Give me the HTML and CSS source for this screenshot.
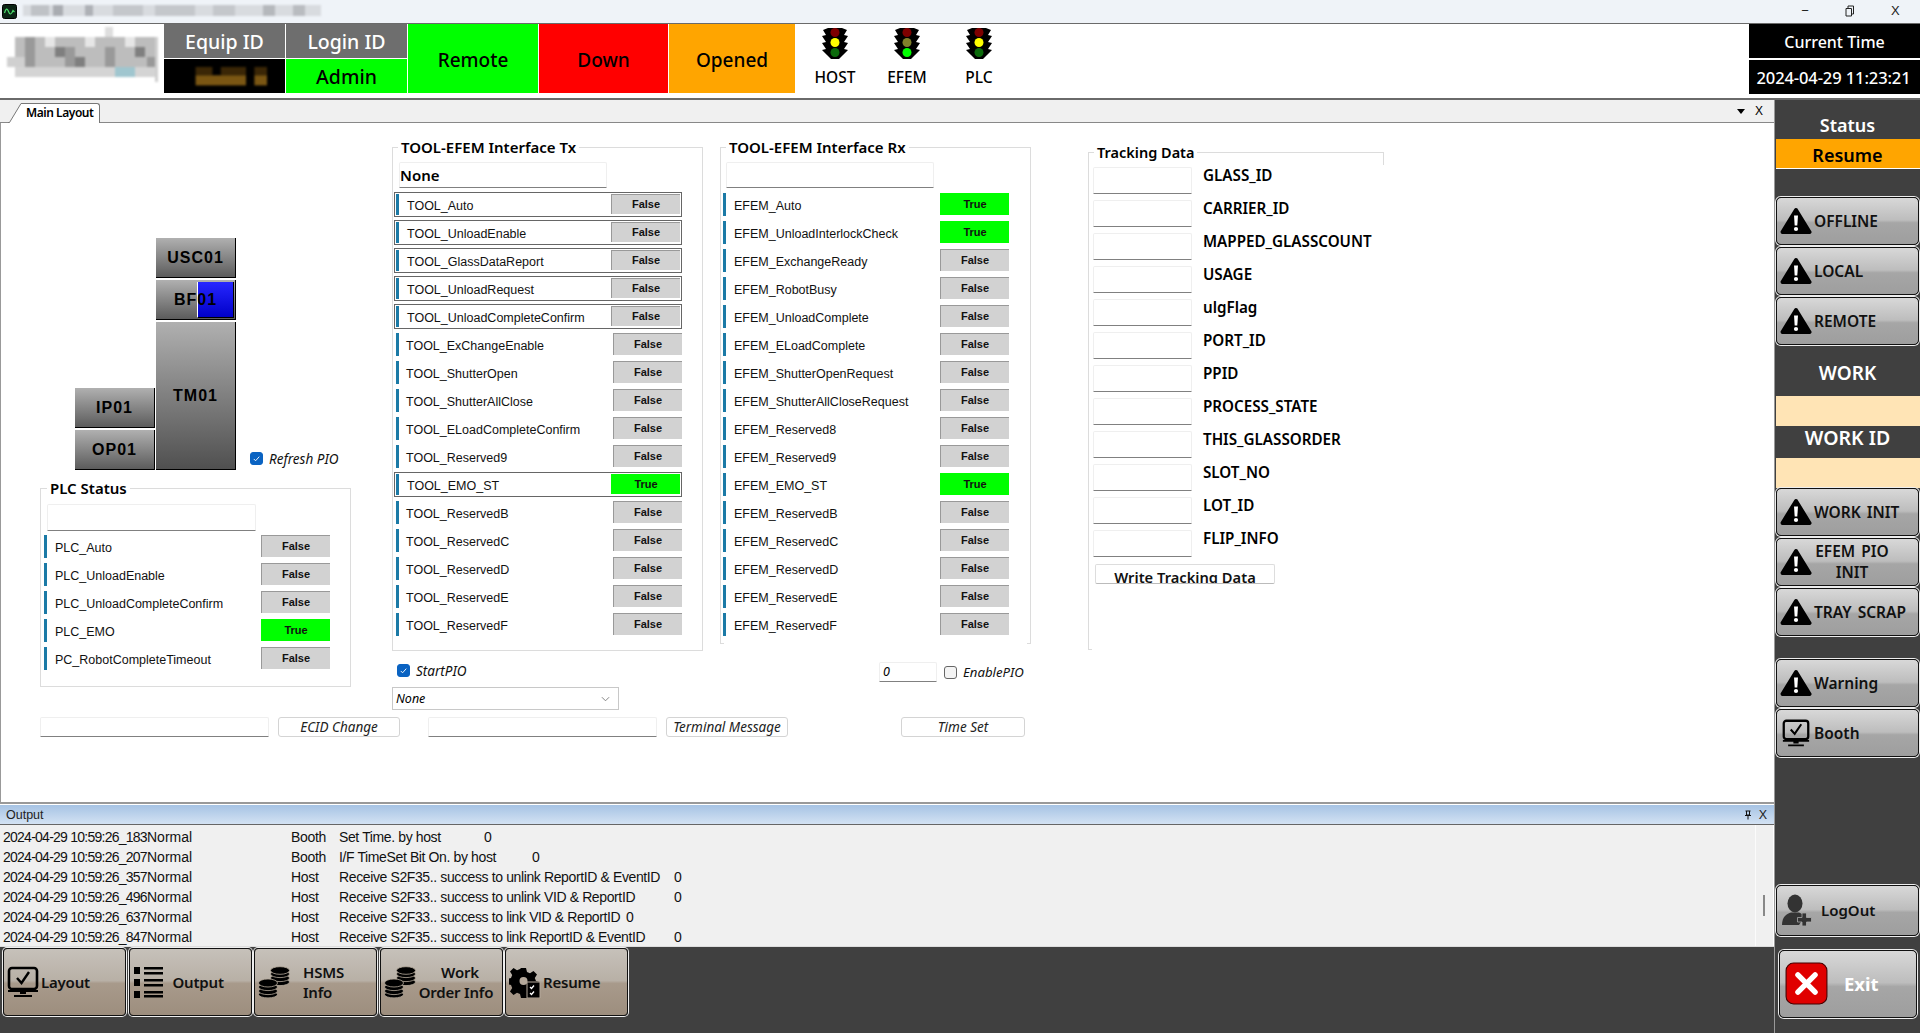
FILE: index.html
```html
<!DOCTYPE html>
<html lang="en">
<head>
<meta charset="utf-8">
<title>Equipment Console</title>
<link rel="stylesheet" href="styles.css">
</head>
<body>
<svg class="defs" width="0" height="0">
  <symbol id="warn" viewBox="0 0 32 28"><path d="M16 3 L29.5 25 H2.5 Z" fill="#000" stroke="#000" stroke-width="4" stroke-linejoin="round"/><path d="M14 8.5 h4 l-.7 10 h-2.6 Z" fill="#fff"/><circle cx="16" cy="22" r="2.1" fill="#fff"/></symbol>
  <symbol id="monitor" viewBox="0 0 32 32"><rect x="2" y="2" width="28" height="21" rx="3" fill="none" stroke="#000" stroke-width="2.6"/><path d="M10 12 l4.5 5 L22 6" fill="none" stroke="#000" stroke-width="2.4"/><path d="M1 24 h30 v2 h-30 Z M13 26 h6 v2 h-6 Z M7 29 h18 v2 H7 Z" fill="#000"/></symbol>
  <symbol id="list" viewBox="0 0 32 32"><path d="M1 1 h6 v7 H1 Z M11 1 h19 v2.5 H11 Z M11 6 h19 v2.5 H11 Z M1 13 h6 v7 H1 Z M11 13 h19 v2.5 H11 Z M11 18 h19 v2.5 H11 Z M1 25 h6 v7 H1 Z M11 25 h19 v2.5 H11 Z M11 29 h19 v2.5 H11 Z" fill="#000"/></symbol>
  <symbol id="coins" viewBox="0 0 32 32">
    <g fill="#000" stroke="#b5a99b" stroke-width=".8"><ellipse cx="22" cy="16" rx="9.500" ry="3.600"/><ellipse cx="22" cy="12" rx="9.500" ry="3.600"/><ellipse cx="22" cy="8" rx="9.500" ry="3.600"/><ellipse cx="22" cy="4.500" rx="9.500" ry="3.800"/>
    <ellipse cx="10" cy="28.500" rx="9.500" ry="3.400"/><ellipse cx="10" cy="25" rx="9.500" ry="3.600"/><ellipse cx="10" cy="21" rx="9.500" ry="3.600"/><ellipse cx="10" cy="17" rx="9.500" ry="4"/></g></symbol>
  <symbol id="gear" viewBox="0 0 32 32"><path d="M12 2 h5 l1 4 3 1.300 3.500-2.200 3.500 3.500-2.200 3.500 1.200 2.900 4 1 v5 l-8 0 -4 4 v7 h-7 l-1-4 -3-1.200-3.500 2.200-3.500-3.500 2.200-3.500-1.200-3-4-1 v-5 l4-1 1.200-3-2.200-3.500 3.500-3.500 3.500 2.200 3-1.300 Z" fill="#000"/><circle cx="14.500" cy="15" r="4" fill="#b5a99b"/><rect x="18" y="16" width="13" height="16" fill="#000" stroke="#b5a99b"/><path d="M21 21 l1.500 1.500 L25 19.500 M21 27 l1.500 1.500 L25 25.500" fill="none" stroke="#fff" stroke-width="1.300"/></symbol>
  <symbol id="user" viewBox="0 0 32 32"><ellipse cx="14" cy="9.500" rx="7.500" ry="9" fill="#333"/><path d="M1 31 C1 22 6 20 10 18.500 h8 C21 20 23 21 24 22 L18 31 Z" fill="#333"/><path d="M21 19 h4.500 v4.500 h5 v4.500 h-5 v4 h-4.500 v-4 h-4.500 v-4.500 h4.500 Z" fill="#333" stroke="#aaa" stroke-width=".8"/></symbol>
  <symbol id="signal-host" viewBox="0 0 28 32"><use href="#lamp-body"/><circle cx="14" cy="5.500" r="4.500" fill="#7d0000"/><circle cx="14" cy="15.500" r="4.500" fill="#ffff00"/><circle cx="14" cy="25.500" r="4.500" fill="#0b6b0b"/></symbol>
  <symbol id="signal-efem" viewBox="0 0 28 32"><use href="#lamp-body"/><circle cx="14" cy="5.500" r="4.500" fill="#7d0000"/><circle cx="14" cy="15.500" r="4.500" fill="#80802a"/><circle cx="14" cy="25.500" r="4.500" fill="#00ff00"/></symbol>
  <symbol id="lamp-body" viewBox="0 0 28 32"><path d="M7 1 h14 l5 2 -3 5 4 1 -4 6 4 1 -4 6 4 1 -5 5 -4 4 h-8 l-4-4 -5-5 4-1 -4-6 4-1 -4-6 4-1 -3-5 Z" fill="#000"/></symbol>
</svg>

<div class="app">
  <div class="titlebar">
    <svg class="app-icon" viewBox="0 0 15 15"><rect x=".5" y=".5" width="14" height="14" rx="2" fill="#0c2416" stroke="#000"/><path d="M2.500 9 Q4.500 2 6.500 7.500 T11 6.500 L12.500 8" fill="none" stroke="#4ee26d" stroke-width="1.200"/></svg>
    <svg class="title-blur" viewBox="0 0 298 12"><g fill="#c4c7cb"><rect width="298" height="11" fill="#d8dbdf"/><rect x="8" width="18" height="11" fill="#bfc2c6"/><rect x="30" width="10" height="11" fill="#a9acb1"/><rect x="62" width="8" height="11" fill="#aeb1b6"/><rect x="90" width="30" height="11"/><rect x="132" width="40" height="11"/><rect x="190" width="22" height="11"/><rect x="240" width="12" height="11" fill="#b5b8bc"/><rect x="270" width="12" height="11" fill="#b9bcc0"/></g></svg>
    <div class="win-controls">
      <span class="win-min">−</span>
      <svg class="win-restore" viewBox="0 0 10 12"><path d="M1 3.500 h5.500 v7.500 H1 Z M3 3 V1 h5.500 v8 H7" fill="none" stroke="#222" stroke-width="1"/></svg>
      <span class="win-close">X</span>
    </div>
  </div>

  <header class="header">
    <svg class="logo" viewBox="0 0 153 58">
      <rect x="10" y="10" width="143" height="30" fill="#bdbdbd"/><rect x="2" y="30" width="20" height="10" fill="#d0d0d0"/>
      <g fill="#999"><rect x="20" y="10" width="10" height="30"/><rect x="60" y="20" width="10" height="20"/><rect x="100" y="20" width="10" height="20"/><rect x="142" y="30" width="10" height="10"/></g>
      <g fill="#7f7f7f"><rect x="50" y="20" width="10" height="10"/><rect x="70" y="30" width="10" height="10"/><rect x="130" y="20" width="10" height="10"/></g>
      <g fill="#e6e6e6"><rect x="40" y="10" width="10" height="10"/><rect x="80" y="10" width="10" height="10"/><rect x="120" y="10" width="10" height="10"/></g>
      <rect x="100" y="0" width="8" height="10" fill="#dedede"/>
      <rect x="10" y="40" width="143" height="10" fill="#d4d4d4"/>
      <rect x="110" y="40" width="20" height="10" fill="#a0c6cf"/>
      <rect x="150" y="10" width="3" height="45" fill="#cfcfcf"/>
    </svg>
    <div class="id-grid">
      <div class="cell cell-grey">Equip ID</div>
      <div class="cell cell-grey">Login ID</div>
      <div class="cell cell-black"><svg class="id-blur" viewBox="0 0 100 24"><g fill="#3a2606"><rect x="15" y="0" width="20" height="10"/><rect x="45" y="0" width="30" height="10"/><rect x="85" y="0" width="15" height="10"/></g><g fill="#7a5613"><rect x="15" y="10" width="60" height="12"/><rect x="85" y="10" width="15" height="12"/></g></svg></div>
      <div class="cell cell-green">Admin</div>
    </div>
    <div class="state state-green">Remote</div>
    <div class="state state-red">Down</div>
    <div class="state state-orange">Opened</div>
    <div class="signals">
      <div class="signal"><svg class="signal-icon"><use href="#signal-host"/></svg><span>HOST</span></div>
      <div class="signal"><svg class="signal-icon"><use href="#signal-efem"/></svg><span>EFEM</span></div>
      <div class="signal"><svg class="signal-icon"><use href="#signal-host"/></svg><span>PLC</span></div>
    </div>
    <div class="clock">
      <div class="clock-cell clock-title">Current Time</div>
      <div class="clock-cell clock-date">2024-04-29 11:23:21</div>
    </div>
  </header>

  <div class="workspace">
    <div class="left">
      <div class="tabstrip">
        <div class="tab">
          <svg class="tab-slant" viewBox="0 0 15 20"><path d="M0 20 H1 L13 1 H15 V20 Z" fill="#fff"/><path d="M0 19.500 H1.500 L13 .5 H15" fill="none" stroke="#777"/></svg>
          <span class="tab-label">Main Layout</span>
        </div>
        <div class="tab-tools"><span class="tab-arrow"></span><span class="tab-x">X</span></div>
      </div>

      <main class="main">
        <div class="upper">
          <section class="col col-a">
            <div class="stage-row">
              <div class="stage">
                <div class="module m-usc">USC01</div>
                <div class="module m-bf"><span class="bf-slot"></span><span class="module-text">BF01</span></div>
                <div class="module m-tm">TM01</div>
                <div class="module m-ip">IP01</div>
                <div class="module m-op">OP01</div>
              </div>
              <label class="check refresh"><span class="box on"><svg viewBox="0 0 12 12"><path d="M3 6.500 l2 2 L9 4" fill="none" stroke="#fff" stroke-width="1"/></svg></span>Refresh PIO</label>
            </div>
            <div class="group plc">
              <div class="legend">PLC Status</div>
              <div class="field plc-field"></div>
              <div class="sig"><i class="bar"></i><span class="name">PLC_Auto</span><b class="val">False</b></div>
              <div class="sig"><i class="bar"></i><span class="name">PLC_UnloadEnable</span><b class="val">False</b></div>
              <div class="sig"><i class="bar"></i><span class="name">PLC_UnloadCompleteConfirm</span><b class="val">False</b></div>
              <div class="sig"><i class="bar"></i><span class="name">PLC_EMO</span><b class="val true">True</b></div>
              <div class="sig"><i class="bar"></i><span class="name">PC_RobotCompleteTimeout</span><b class="val">False</b></div>
            </div>
          </section>

          <section class="col col-b">
            <div class="group tx">
              <div class="legend">TOOL-EFEM Interface Tx</div>
              <div class="field if-field">None</div>
              <div class="sig framed"><i class="bar"></i><span class="name">TOOL_Auto</span><b class="val">False</b></div>
              <div class="sig framed"><i class="bar"></i><span class="name">TOOL_UnloadEnable</span><b class="val">False</b></div>
              <div class="sig framed"><i class="bar"></i><span class="name">TOOL_GlassDataReport</span><b class="val">False</b></div>
              <div class="sig framed"><i class="bar"></i><span class="name">TOOL_UnloadRequest</span><b class="val">False</b></div>
              <div class="sig framed"><i class="bar"></i><span class="name">TOOL_UnloadCompleteConfirm</span><b class="val">False</b></div>
              <div class="sig"><i class="bar"></i><span class="name">TOOL_ExChangeEnable</span><b class="val">False</b></div>
              <div class="sig"><i class="bar"></i><span class="name">TOOL_ShutterOpen</span><b class="val">False</b></div>
              <div class="sig"><i class="bar"></i><span class="name">TOOL_ShutterAllClose</span><b class="val">False</b></div>
              <div class="sig"><i class="bar"></i><span class="name">TOOL_ELoadCompleteConfirm</span><b class="val">False</b></div>
              <div class="sig"><i class="bar"></i><span class="name">TOOL_Reserved9</span><b class="val">False</b></div>
              <div class="sig framed"><i class="bar"></i><span class="name">TOOL_EMO_ST</span><b class="val true">True</b></div>
              <div class="sig"><i class="bar"></i><span class="name">TOOL_ReservedB</span><b class="val">False</b></div>
              <div class="sig"><i class="bar"></i><span class="name">TOOL_ReservedC</span><b class="val">False</b></div>
              <div class="sig"><i class="bar"></i><span class="name">TOOL_ReservedD</span><b class="val">False</b></div>
              <div class="sig"><i class="bar"></i><span class="name">TOOL_ReservedE</span><b class="val">False</b></div>
              <div class="sig"><i class="bar"></i><span class="name">TOOL_ReservedF</span><b class="val">False</b></div>
            </div>
            <label class="check start"><span class="box on"><svg viewBox="0 0 12 12"><path d="M3 6.500 l2 2 L9 4" fill="none" stroke="#fff" stroke-width="1"/></svg></span>StartPIO</label>
            <div class="combo">None<svg class="combo-arrow" viewBox="0 0 10 6"><path d="M1 1 l4 4 4-4" fill="none" stroke="#777"/></svg></div>
          </section>

          <section class="col col-c">
            <div class="group rx">
              <div class="legend">TOOL-EFEM Interface Rx</div>
              <div class="field if-field rx-field"></div>
              <div class="sig"><i class="bar"></i><span class="name">EFEM_Auto</span><b class="val true">True</b></div>
              <div class="sig"><i class="bar"></i><span class="name">EFEM_UnloadInterlockCheck</span><b class="val true">True</b></div>
              <div class="sig"><i class="bar"></i><span class="name">EFEM_ExchangeReady</span><b class="val">False</b></div>
              <div class="sig"><i class="bar"></i><span class="name">EFEM_RobotBusy</span><b class="val">False</b></div>
              <div class="sig"><i class="bar"></i><span class="name">EFEM_UnloadComplete</span><b class="val">False</b></div>
              <div class="sig"><i class="bar"></i><span class="name">EFEM_ELoadComplete</span><b class="val">False</b></div>
              <div class="sig"><i class="bar"></i><span class="name">EFEM_ShutterOpenRequest</span><b class="val">False</b></div>
              <div class="sig"><i class="bar"></i><span class="name">EFEM_ShutterAllCloseRequest</span><b class="val">False</b></div>
              <div class="sig"><i class="bar"></i><span class="name">EFEM_Reserved8</span><b class="val">False</b></div>
              <div class="sig"><i class="bar"></i><span class="name">EFEM_Reserved9</span><b class="val">False</b></div>
              <div class="sig"><i class="bar"></i><span class="name">EFEM_EMO_ST</span><b class="val true">True</b></div>
              <div class="sig"><i class="bar"></i><span class="name">EFEM_ReservedB</span><b class="val">False</b></div>
              <div class="sig"><i class="bar"></i><span class="name">EFEM_ReservedC</span><b class="val">False</b></div>
              <div class="sig"><i class="bar"></i><span class="name">EFEM_ReservedD</span><b class="val">False</b></div>
              <div class="sig"><i class="bar"></i><span class="name">EFEM_ReservedE</span><b class="val">False</b></div>
              <div class="sig"><i class="bar"></i><span class="name">EFEM_ReservedF</span><b class="val">False</b></div>
            </div>
            <div class="enable-row">
              <div class="field num-field">0</div>
              <label class="check enable"><span class="box"></span>EnablePIO</label>
            </div>
          </section>

          <section class="col col-d">
            <div class="group tracking">
              <div class="legend">Tracking Data</div>
              <div class="track-grid">
                <div class="field"></div><span>GLASS_ID</span>
                <div class="field"></div><span>CARRIER_ID</span>
                <div class="field"></div><span>MAPPED_GLASSCOUNT</span>
                <div class="field"></div><span>USAGE</span>
                <div class="field"></div><span>ulgFlag</span>
                <div class="field"></div><span>PORT_ID</span>
                <div class="field"></div><span>PPID</span>
                <div class="field"></div><span>PROCESS_STATE</span>
                <div class="field"></div><span>THIS_GLASSORDER</span>
                <div class="field"></div><span>SLOT_NO</span>
                <div class="field"></div><span>LOT_ID</span>
                <div class="field"></div><span>FLIP_INFO</span>
              </div>
              <button class="write-btn">Write Tracking Data</button>
            </div>
          </section>
        </div>
        <div class="ecid-row">
          <div class="field wide"></div>
          <button class="flat">ECID Change</button>
          <div class="field wide wide-2"></div>
          <button class="flat">Terminal Message</button>
          <button class="flat time-set">Time Set</button>
        </div>
      </main>

      <section class="output">
        <div class="output-head"><span>Output</span>
          <span class="output-tools"><svg class="pin" viewBox="0 0 8 10"><path d="M1.500 1 h5 M2.500 1 v4 h3 v-4 M1 5.500 h6 M4 5.500 v4" fill="none" stroke="#111"/></svg><span>X</span></span>
        </div>
        <div class="log">
          <div class="log-row"><span class="t">2024-04-29 10:59:26_183</span><span class="lv">Normal</span><span class="src">Booth</span><span class="msg w1">Set Time. by host</span><span>0</span></div>
          <div class="log-row"><span class="t">2024-04-29 10:59:26_207</span><span class="lv">Normal</span><span class="src">Booth</span><span class="msg w2">I/F TimeSet Bit On. by host</span><span>0</span></div>
          <div class="log-row"><span class="t">2024-04-29 10:59:26_357</span><span class="lv">Normal</span><span class="src">Host</span><span class="msg w3">Receive S2F35.. success to unlink ReportID &amp; EventID</span><span>0</span></div>
          <div class="log-row"><span class="t">2024-04-29 10:59:26_496</span><span class="lv">Normal</span><span class="src">Host</span><span class="msg w3">Receive S2F33.. success to unlink VID &amp; ReportID</span><span>0</span></div>
          <div class="log-row"><span class="t">2024-04-29 10:59:26_637</span><span class="lv">Normal</span><span class="src">Host</span><span class="msg w5">Receive S2F33.. success to link VID &amp; ReportID</span><span>0</span></div>
          <div class="log-row"><span class="t">2024-04-29 10:59:26_847</span><span class="lv">Normal</span><span class="src">Host</span><span class="msg w3">Receive S2F35.. success to link ReportID &amp; EventID</span><span>0</span></div>
          <span class="scroll-thumb"></span>
        </div>
      </section>

      <nav class="bottombar">
        <button class="nav-btn"><svg class="nav-icon"><use href="#monitor"/></svg><span class="nav-text left-text">Layout</span></button>
        <button class="nav-btn"><svg class="nav-icon"><use href="#list"/></svg><span class="nav-text left-text output-text">Output</span></button>
        <button class="nav-btn"><svg class="nav-icon"><use href="#coins"/></svg><span class="nav-text left-text hsms-text">HSMS<br>Info</span></button>
        <button class="nav-btn"><svg class="nav-icon"><use href="#coins"/></svg><span class="nav-text work-text">Work<br>Order Info</span></button>
        <button class="nav-btn"><svg class="nav-icon"><use href="#gear"/></svg><span class="nav-text left-text">Resume</span></button>
      </nav>
    </div>

    <aside class="sidebar">
      <div class="side-label status-label">Status</div>
      <div class="side-value orange">Resume</div>
      <button class="side-btn first"><svg class="warn"><use href="#warn"/></svg><span>OFFLINE</span></button>
      <button class="side-btn"><svg class="warn"><use href="#warn"/></svg><span>LOCAL</span></button>
      <button class="side-btn"><svg class="warn"><use href="#warn"/></svg><span>REMOTE</span></button>
      <div class="side-label work-label">WORK</div>
      <div class="side-value peach"></div>
      <div class="side-label workid-label">WORK ID</div>
      <div class="side-value peach"></div>
      <button class="side-btn"><svg class="warn"><use href="#warn"/></svg><span>WORK INIT</span></button>
      <button class="side-btn"><svg class="warn"><use href="#warn"/></svg><span class="two-line">EFEM PIO<br>INIT</span></button>
      <button class="side-btn"><svg class="warn"><use href="#warn"/></svg><span>TRAY SCRAP</span></button>
      <button class="side-btn warning"><svg class="warn"><use href="#warn"/></svg><span>Warning</span></button>
      <button class="side-btn"><svg class="warn"><use href="#monitor"/></svg><span>Booth</span></button>
      <button class="side-btn logout"><svg class="user-icon"><use href="#user"/></svg><span>LogOut</span></button>
      <button class="side-btn exit">
        <svg class="exit-icon" viewBox="0 0 40 40"><rect x="1" y="1" width="38" height="38" rx="7" fill="#e00000" stroke="#400"/><path d="M12 12 L28 28 M28 12 L12 28" stroke="#fff" stroke-width="5" stroke-linecap="round"/></svg>
        <span>Exit</span>
      </button>
    </aside>
  </div>
</div>
</body>
</html>
```

FILE: styles.css
```css
* { box-sizing: border-box; }
html, body { margin: 0; padding: 0; }
body { width: 1920px; height: 1033px; overflow: hidden; background: #fff; font-family: "Liberation Sans", Arial, sans-serif; color: #000; }
.defs { display: block; height: 0; width: 0; overflow: hidden; }
.app { width: 1920px; height: 1033px; display: flex; flex-direction: column; }

/* title bar */
.titlebar { height: 23px; background: #eff3f8; display: flex; align-items: flex-start; flex: none; }
.app-icon { width: 15px; height: 15px; margin: 4px 0 0 2px; }
.title-blur { width: 298px; height: 12px; margin: 5px 0 0 6px; filter: blur(1px); }
.win-controls { margin-left: auto; display: flex; align-items: center; height: 21px; font: 13px "Liberation Sans", sans-serif; color: #222; }
.win-min { width: 10px; text-align: center; margin-right: 35px; }
.win-restore { width: 10px; height: 12px; margin-right: 36px; }
.win-close { width: 10px; margin-right: 19px; }

/* header */
.header { height: 77px; flex: none; display: flex; border-top: 1px solid #6a6a6a; border-bottom: 2px solid #6a6a6a; background: #fff; font-family: "Noto Sans", sans-serif; }
.logo { width: 153px; height: 58px; margin: 3px 6px 0 5px; filter: blur(1px); flex: none; }
.id-grid { display: grid; grid-template-columns: 121px 121px; grid-template-rows: 34px 34px; gap: 1px; flex: none; align-self: flex-start; }
.cell { display: flex; align-items: center; justify-content: center; font-size: 19.500px; font-weight: 500; padding-top: 1px; }
.cell-grey { background: #6e6e6e; color: #fff; }
.cell-black { background: #000; }
.cell-green { background: #00ff00; }
.id-blur { width: 84px; height: 24px; filter: blur(1px); }
.state { height: 69px; display: flex; align-items: center; justify-content: center; font-size: 19px; font-weight: 500; flex: none; margin-left: 1px; padding-top: 2px; }
.state-green { width: 130px; background: #00ff00; }
.state-red { width: 129px; background: #ff0000; }
.state-orange { width: 126px; background: #ffa500; margin-left: 1px; }
.signals { display: flex; flex: none; margin-left: 19px; gap: 30px; }
.signal { width: 42px; display: flex; flex-direction: column; align-items: center; font-size: 15.500px; font-weight: 500; padding-top: 3px; }
.signal-icon { width: 28px; height: 32px; }
.signal span { margin-top: 7px; line-height: 22px; }
.clock { margin-left: auto; width: 171px; display: flex; flex-direction: column; gap: 2px; flex: none; }
.clock-cell { height: 34px; background: #000; color: #fff; display: flex; align-items: center; justify-content: center; font-size: 16px; font-weight: 500; white-space: nowrap; }
.clock-title { padding-top: 1px; }
.clock-date { font-size: 16.500px; letter-spacing: -.1px; padding-right: 2px; }

/* workspace */
.workspace { flex: 1; display: flex; min-height: 0; }
.left { width: 1774px; display: flex; flex-direction: column; flex: none; }
.tabstrip { height: 24px; flex: none; background: #f0f0f0; border-bottom: 2px solid #888; display: flex; align-items: flex-end; padding-left: 8px; margin-bottom: -1px; }
.tab { display: flex; height: 20px; margin-bottom: -1px; }
.tab-slant { width: 15px; height: 20px; display: block; }
.tab-label { width: 77px; background: #fff; border: 1px solid #777; border-left: 0; border-bottom: 0; border-radius: 0 3px 0 0; font: 600 12px "Noto Sans", sans-serif; letter-spacing: -.45px; line-height: 18px; padding-left: 3px; white-space: nowrap; }
.tab-tools { margin-left: auto; display: flex; align-items: center; height: 22px; font-size: 12px; margin-right: 11px; gap: 10px; }
.tab-arrow { width: 0; height: 0; border: 4px solid transparent; border-top: 5px solid #000; border-bottom: 0; }
.tab-x { line-height: 22px; }

.main { height: 681px; flex: none; background: #fff; border-left: 1px solid #999; border-bottom: 2px solid #999; padding: 24px 0 0 39px; display: flex; flex-direction: column; }
.upper { display: flex; height: 562px; align-items: flex-start; }
.col { flex: none; }
.col-a { width: 311px; margin-top: 91px; }
.col-b { width: 311px; margin-left: 41px; }
.col-c { width: 311px; margin-left: 17px; }
.col-d { width: 296px; margin-left: 57px; margin-top: 5px; }

/* diagram */
.stage-row { display: flex; align-items: flex-end; padding-left: 35px; }
.stage { display: grid; grid-template-columns: 80px 80px; grid-template-rows: 40px 40px 64px 40px 40px; column-gap: 1px; row-gap: 2px; flex: none; }
.module { position: relative; display: flex; align-items: center; justify-content: center; background: linear-gradient(#b0b0b0, #5c5c5c); border-right: 1px solid #000; border-bottom: 1px solid #000; font: bold 16px "Liberation Sans", sans-serif; letter-spacing: 1px; }
.module-text { position: relative; }
.m-usc { grid-column: 2; grid-row: 1; }
.m-bf { grid-column: 2; grid-row: 2; }
.m-tm { grid-column: 2; grid-row: 3 / 6; background: linear-gradient(#b0b0b0, #505050); }
.m-ip { grid-column: 1; grid-row: 4; }
.m-op { grid-column: 1; grid-row: 5; }
.bf-slot { position: absolute; left: 41px; top: 2px; width: 37px; height: 36px; background: linear-gradient(#2727ff, #0000c8); border-left: 1px solid #fff; border-right: 1px solid #000; border-bottom: 1px solid #000; }

/* checks */
.check { display: flex; align-items: center; font: italic 13.500px "Noto Sans", sans-serif; color: #111; white-space: nowrap; }
.enable { font-size: 13.200px; }
.box { width: 13px; height: 13px; margin-right: 6px; border: 1px solid #666; background: #f4f4f4; border-radius: 3px; flex: none; display: block; }
.box.on { background: #0a63c2; border-color: #0a63c2; }
.box svg { display: block; width: 11px; height: 11px; }
.refresh { margin: 0 0 4px 14px; height: 15px; }
.start { margin: 12px 0 0 5px; height: 15px; }

/* groups */
.group { position: relative; border: 1px solid #dcdcdc; background: #fff; }
.legend { width: fit-content; margin: -10px 0 0 5px; padding: 0 3px; background: #fff; height: 18px; font: 600 15px/18px "Noto Sans", sans-serif; white-space: nowrap; }
.tx .legend { margin-left: 4px; }
.field { background: #fff; border: 1px solid #efefef; border-bottom: 1px solid #808080; border-radius: 2px 2px 0 0; }
.plc { margin-top: 18px; height: 199px; padding-left: 1px; }
.plc .name { margin-left: 8px; }
.plc-field { width: 209px; height: 27px; margin: 7px 0 3px 5px; }
.tx { height: 504px; padding-left: 1px; }
.if-field { width: 208px; height: 26px; margin: 6px 0 4px 5px; font: 600 15px/25px "Noto Sans", sans-serif; }
.rx { height: 497px; border-bottom: 0; }
.rx::before, .rx::after { content: ""; position: absolute; bottom: 0; width: 3px; height: 1px; background: #dcdcdc; }
.rx::before { left: 0; }
.rx::after { right: 0; }
.rx-field { margin-left: 5px; }
.rx .name { margin-left: 8px; }

/* signal rows */
.sig { width: 289px; height: 28px; display: flex; padding: 1px 0 0 2px; align-items: flex-start; font: 12.500px "Liberation Sans", sans-serif; }
.bar { display: block; width: 3px; height: 23px; background: #1b7aa6; flex: none; }
.name { margin-left: 7px; line-height: 26px; white-space: nowrap; color: #111; }
.val { width: 69px; height: 22px; margin-left: auto; margin-right: 1px; background: #d2d2d2; border-top: 1px solid #999; border-left: 1px solid #999; font: bold 11px/20px "Liberation Sans", sans-serif; text-align: center; color: #111; }
.val.true { background: #00ff00; border-color: #00ff00; }
.sig.framed { height: 25px; margin-bottom: 3px; width: 288px; border: 1px solid #666; padding: 1px 0 0 1px; }
.framed .bar { height: 21px; }
.framed .name { margin-left: 8px; line-height: 25px; }
.framed .val { height: 20px; line-height: 19px; margin-right: 1px; }

/* combo + enable */
.combo { width: 227px; height: 23px; margin-top: 9px; border: 1px solid #c8c8c8; display: flex; align-items: center; justify-content: space-between; padding: 0 8px 0 3px; font: italic 12.500px "Noto Sans", sans-serif; }
.combo-arrow { width: 9px; height: 6px; }
.enable-row { display: flex; align-items: center; height: 20px; margin: 18px 0 0 159px; }
.num-field { width: 58px; height: 20px; font: italic 12.500px/18px "Noto Sans", sans-serif; padding-left: 3px; margin-right: 7px; }

/* tracking */
.tracking { height: 498px; border-right: 0; border-bottom: 0; padding-left: 4px; }
.tracking::before { content: ""; position: absolute; left: 0; bottom: 0; width: 3px; height: 1px; background: #dcdcdc; }
.tracking::after { content: ""; position: absolute; right: 0; top: 0; width: 1px; height: 12px; background: #dcdcdc; }
.tracking .legend { margin-left: 1px; font-size: 14.500px; }
.track-grid { display: grid; grid-template-columns: 99px auto; grid-auto-rows: 33px; column-gap: 11px; margin-top: 6px; font: 600 15.200px/16px "Noto Sans", sans-serif; justify-content: start; }
.track-grid .field { height: 27px; }
.track-grid span { white-space: nowrap; }
.write-btn { display: block; width: 180px; height: 20px; margin: 1px 0 0 2px; background: #fff; border: 1px solid #ddd; border-bottom-color: #bbb; border-radius: 2px; padding: 2px 0 0; overflow: hidden; font: 600 14.700px/20px "Noto Sans", sans-serif; color: #111; }

/* ecid row */
.ecid-row { display: flex; height: 20px; margin-top: 8px; align-items: stretch; }
.wide { width: 229px; }
.wide-2 { margin-left: 28px; }
.flat { width: 122px; margin-left: 9px; background: #fff; border: 1px solid #d4d4d4; border-radius: 3px; padding: 0; font: italic 13.500px "Noto Sans", sans-serif; color: #222; }
.time-set { width: 124px; margin-left: 113px; }

/* output */
.output { height: 141px; flex: none; margin-top: 1px; display: flex; flex-direction: column; background: #f0f0f0; }
.output-head { height: 20px; flex: none; background: linear-gradient(#a6c3e4, #d3e2f3); border-bottom: 1px solid #666; display: flex; justify-content: space-between; align-items: center; padding: 1px 7px 0 6px; font-size: 12.500px; color: #222; }
.output-tools { display: flex; gap: 7px; align-items: center; }
.pin { width: 8px; height: 10px; }
.log { position: relative; flex: 1; overflow: hidden; font: 14px/20px "Liberation Sans", sans-serif; color: #111; padding-top: 2px; border-right: 1px solid #fff; }
.log::after { content: ""; position: absolute; left: 1755px; top: 0; bottom: 0; width: 1px; background: #fbfbfb; }
.log-row { display: flex; white-space: nowrap; height: 20px; padding-left: 3px; }
.t { width: 144px; letter-spacing: -.75px; }
.lv { width: 144px; }
.src { width: 48px; letter-spacing: -.3px; }
.msg { letter-spacing: -.38px; }
.w1 { width: 145px; }
.w2 { width: 193px; }
.w3 { width: 335px; }
.w5 { width: 287px; }
.scroll-thumb { position: absolute; left: 1763px; top: 70px; width: 2px; height: 21px; background: #888; }

/* bottom bar */
.bottombar { flex: 1; background: #404040; display: flex; padding: 1px 0 0 3px; gap: 3px; align-items: flex-start; border-top: 1px solid #ddd; }
.nav-btn { width: 123px; height: 68px; margin-right: -.5px; padding: 0 0 0 3px; display: flex; align-items: center; background: linear-gradient(#c6c1ba 0%, #b8b0a6 48%, #a89a8b 52%, #9d8e7e 100%); border: 1px solid #111; box-shadow: 0 0 0 1px #eee; border-radius: 4px; font: 600 15px/20px "Noto Sans", sans-serif; color: #111; }
.nav-icon { width: 32px; height: 32px; flex: none; }
.nav-text { flex: 1; text-align: center; letter-spacing: -.2px; padding-right: 6px; }
.nav-text.left-text { text-align: left; padding-left: 2px; }
.nav-text.output-text { padding-left: 8px; }
.nav-text.hsms-text { padding-left: 13px; }
.nav-text.work-text { padding-right: 5px; text-indent: 8px; }

/* sidebar */
.sidebar { width: 146px; flex: none; background: #404040; border-left: 1px solid #999; display: flex; flex-direction: column; align-items: center; font-family: "Noto Sans", sans-serif; }
.side-label { color: #fff; font-size: 18px; font-weight: 600; text-align: center; width: 100%; }
.status-label { height: 39px; padding-top: 12px; line-height: 26px; }
.side-value { width: 144px; height: 30px; }
.orange { background: #ffa500; border-bottom: 1px solid #fff; font-size: 18px; font-weight: 600; line-height: 33px; text-align: center; }
.peach { background: #ffe4b5; }
.work-label { height: 49px; line-height: 53px; font-size: 19px; }
.workid-label { height: 32px; line-height: 24px; font-size: 19.500px; }
.side-btn { width: 143px; height: 48px; margin-bottom: 2px; flex: none; display: flex; align-items: center; padding: 0 0 1px 3px; background: linear-gradient(#d8d8d8 0%, #bdbdbd 48%, #a6a6a6 54%, #9e9e9e 100%); border: 1px solid #111; box-shadow: 0 0 0 1px #eee; border-radius: 5px; font: 600 15.500px/20px "Noto Sans", sans-serif; word-spacing: 2px; color: #111; white-space: nowrap; }
.side-btn.first { margin-top: 28px; }
.warn { width: 32px; height: 28px; flex: none; margin-right: 2px; }
.two-line { flex: 1; text-align: center; padding-right: 28px; line-height: 21px; }
.side-btn.warning { margin-top: 21px; }
.side-btn.logout { height: 51px; margin-top: 126px; padding-left: 4px; font-size: 15px; }
.user-icon { width: 32px; height: 32px; margin-right: 8px; }
.side-btn.exit { width: 138px; height: 68px; margin: 12px 0 0 1px; padding-left: 5px; }
.exit-icon { width: 43px; height: 43px; margin-right: 16px; }
.exit span { color: #fff; font-size: 18.500px; font-weight: 700; }
```
